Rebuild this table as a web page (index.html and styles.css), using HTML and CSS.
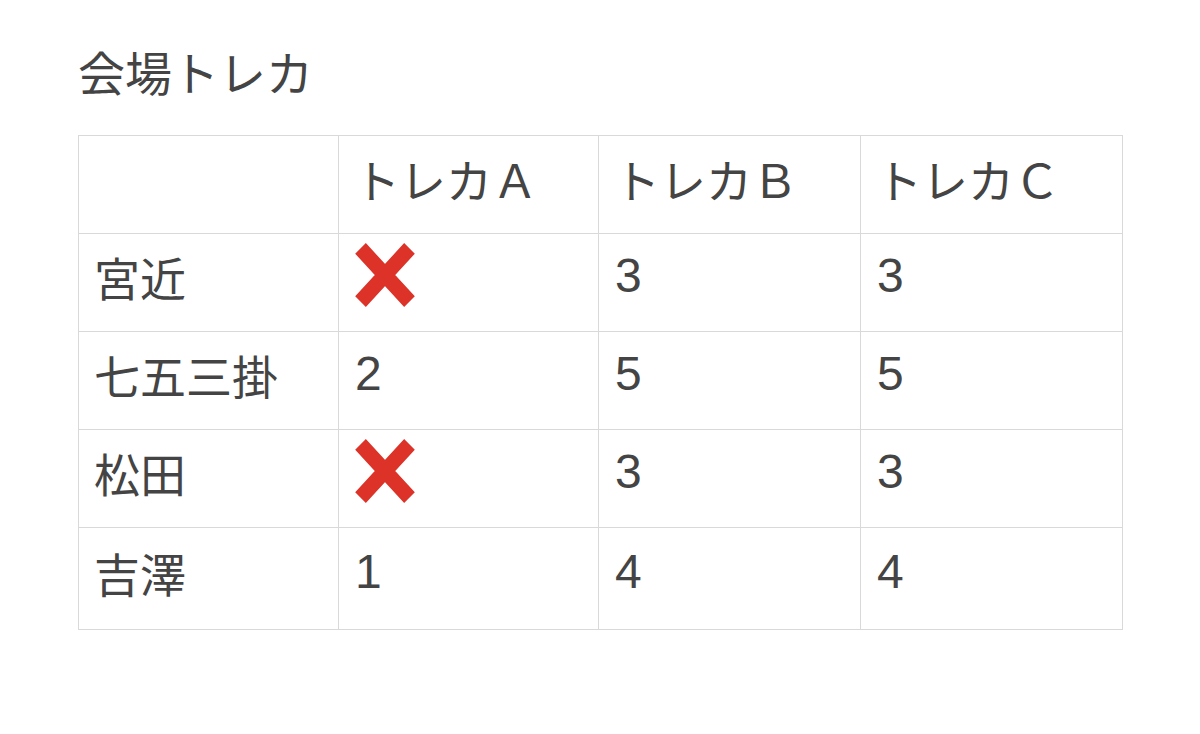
FILE: index.html
```html
<!DOCTYPE html>
<html lang="ja">
<head>
<meta charset="utf-8">
<title>会場トレカ</title>
<link rel="stylesheet" href="styles.css">
</head>
<body>
<main class="page">
  <h1 class="title">会場トレカ</h1>
  <table class="grid">
    <colgroup>
      <col class="c1"><col class="c2"><col class="c3"><col class="c4">
    </colgroup>
    <tr class="row">
      <td></td><td>トレカＡ</td><td>トレカＢ</td><td>トレカＣ</td>
    </tr>
    <tr class="row">
      <td>宮近</td>
      <td><svg class="cross" viewBox="0 0 62 60" aria-label="❌"><path d="M3 10 L13 0 L59 50 L49 60 Z M49 0 L59 10 L13 60 L3 50 Z" fill="#dd3228"/></svg></td>
      <td class="num">3</td><td class="num">3</td>
    </tr>
    <tr class="row">
      <td>七五三掛</td><td class="num">2</td><td class="num">5</td><td class="num">5</td>
    </tr>
    <tr class="row">
      <td>松田</td>
      <td><svg class="cross" viewBox="0 0 62 60" aria-label="❌"><path d="M3 10 L13 0 L59 50 L49 60 Z M49 0 L59 10 L13 60 L3 50 Z" fill="#dd3228"/></svg></td>
      <td class="num">3</td><td class="num">3</td>
    </tr>
    <tr class="row last">
      <td>吉澤</td><td class="num">1</td><td class="num">4</td><td class="num">4</td>
    </tr>
  </table>
</main>
</body>
</html>
```
FILE: styles.css
```css
html, body {
  margin: 0;
  padding: 0;
  background: #ffffff;
}
body {
  font-family: "Noto Sans CJK JP", "Noto Sans", sans-serif;
  color: #444444;
}
.page {
  padding: 38px 0 0 78px;
}
.title {
  margin: 0 0 31px 0;
  font-size: 47px;
  font-weight: 400;
  line-height: 66px;
}
.grid {
  border-collapse: collapse;
  table-layout: fixed;
  width: 1044px;
  font-size: 46px;
}
.c1 { width: 260px; }
.c2 { width: 260px; }
.c3 { width: 262px; }
.c4 { width: 262px; }
.grid td {
  border: 1px solid #d9d9d9;
  padding: 0 0 14px 15px;
  height: 83px;
  vertical-align: middle;
  line-height: 1;
  white-space: nowrap;
}
.grid .num {
  font-family: "Liberation Sans", "Noto Sans CJK JP", sans-serif;
  font-size: 48px;
  padding-left: 16px;
}
.grid .last td {
  height: 87px;
}
.cross {
  display: block;
  width: 66px;
  height: 64px;
  margin: -2px 0 0 -2px;
}
```
